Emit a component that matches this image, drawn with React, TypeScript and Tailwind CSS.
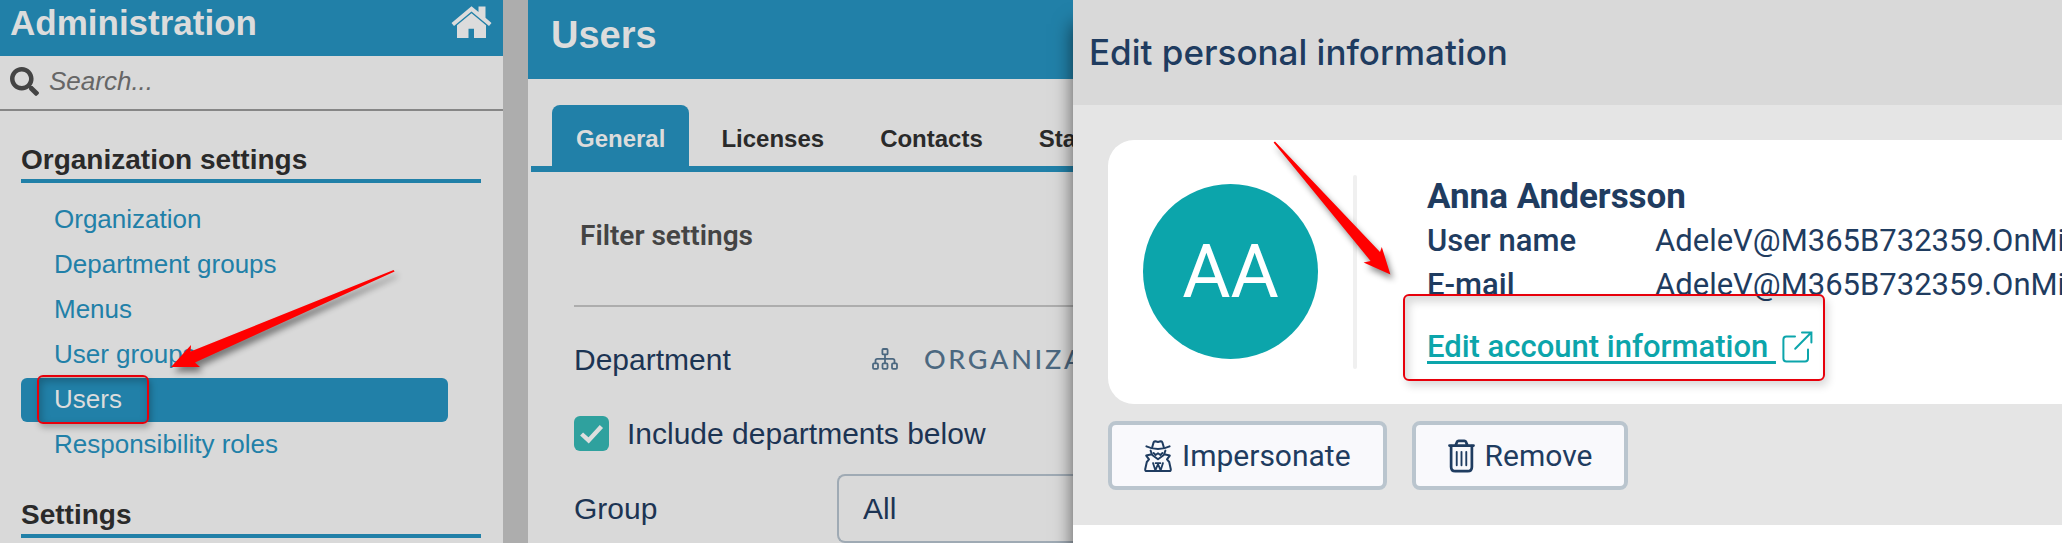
import React, { useState } from 'react';
import { FaSearch } from 'react-icons/fa';

const ORG_LINKS = ['Organization', 'Department groups', 'Menus', 'User groups', 'Users', 'Responsibility roles'];
const TABS = ['General', 'Licenses', 'Contacts', 'Statistics'];
const ACCOUNT = 'AdeleV@M365B732359.OnMicrosoft.com';

const HomeIcon: React.FC = () => (
  <svg width="41" height="32" viewBox="0 0 41 32" fill="currentColor" aria-hidden="true">
    <path d="M20.5 0.2 27.5 6V0.5H34.5V11.8L40.5 16.9 38 20 20.5 5.4 3 20 0.5 16.9Z" />
    <path d="M20.5 7.2 35 19.2V32H23V22.8H17.5V32H6V19.2Z" />
  </svg>
);

const OrgIcon: React.FC = () => (
  <svg width="26" height="22" viewBox="0 0 26 22" fill="none" stroke="currentColor" strokeWidth="1.8" aria-hidden="true">
    <rect x="10.4" y="1" width="5.2" height="5.4" rx="1" />
    <rect x="1" y="15.4" width="5" height="5.4" rx="1" />
    <rect x="10.5" y="15.4" width="5" height="5.4" rx="1" />
    <rect x="20" y="15.4" width="5" height="5.4" rx="1" />
    <path d="M13 6.4V15.4M3.5 15.4V12.6Q3.5 10.8 5.3 10.8H20.7Q22.5 10.8 22.5 12.6V15.4" />
  </svg>
);

const SpyIcon: React.FC = () => (
  <svg width="28" height="32" viewBox="0 0 28 32" fill="none" stroke="currentColor" strokeWidth="2" strokeLinejoin="round" strokeLinecap="round" aria-hidden="true">
    <path d="M8.2 7.2 9.6 2.4Q10 1 11.4 1.2L14 2 16.6 1.2Q18 1 18.4 2.4L19.8 7.2" />
    <path d="M2.4 6.4Q8 9 14 9T25.6 6.4" />
    <path d="M6.6 10.6 8.2 15 14 19.2 19.8 15 21.4 10.6" />
    <path d="M9.6 13 11.6 15 14 13.2 16.4 15 18.4 13" strokeWidth="1.8" />
    <path d="M6.8 14.6 2.2 15.6 5 19.4 2.8 22 1.2 29.2Q1 31 2.6 31H25.4Q27 31 26.8 29.2L25.2 22 23 19.4 25.8 15.6 21.2 14.6" />
    <path d="M9 23 11.4 30.4 14 24 16.6 30.4 19 23M11.6 23.2H16.4" strokeWidth="1.8" />
  </svg>
);

const TrashIcon: React.FC = () => (
  <svg width="27" height="34" viewBox="0 0 26 32" fill="none" stroke="currentColor" strokeWidth="2.6" strokeLinecap="round" strokeLinejoin="round" aria-hidden="true">
    <path d="M1.4 6H24.6M7.4 5.4 8.8 2.2Q9.2 1.4 10.2 1.4H15.8Q16.8 1.4 17.2 2.2L18.6 5.4" />
    <path d="M3 6.4V26.6Q3 30.6 7 30.6H19Q23 30.6 23 26.6V6.4" />
    <path d="M8.4 12V25M13 12V25M17.6 12V25" strokeWidth="1.8" />
  </svg>
);

const ExternalIcon: React.FC = () => (
  <svg width="31" height="32" viewBox="0 0 31 32" fill="none" stroke="currentColor" strokeWidth="2" strokeLinecap="round" aria-hidden="true">
    <path d="M13 5.4H4.4Q1.4 5.4 1.4 8.4V27.4Q1.4 30.4 4.4 30.4H23Q26 30.4 26 27.4V18.6" />
    <path d="M20 1.4H29.4V11.6M29 1.8 13.2 17.8" />
  </svg>
);

const SectionTitle: React.FC<{ children: React.ReactNode }> = ({ children }) => (
  <h2 className="border-b-4 border-[#2180a8] pb-[3px] text-[28px] leading-8 font-bold text-[#2a2a2a]">{children}</h2>
);

const Sidebar: React.FC = () => (
  <aside className="w-[503px] shrink-0 bg-[#d9d9d9]">
    <header className="flex h-14 items-start justify-between bg-[#2180a8] pr-[11px] pl-[10px] text-[#dcdcdc]">
      <h1 className="pt-[3px] text-[35px] leading-10 font-bold">Administration</h1>
      <a href="#home" aria-label="Home" className="pt-[6px]"><HomeIcon /></a>
    </header>
    <label className="flex h-[55px] items-center gap-[10px] border-b-2 border-[#868686] px-[10px] pb-[2px] text-[#444]">
      <FaSearch size={29} aria-hidden="true" />
      <input
        type="search"
        aria-label="Search"
        placeholder="Search..."
        className="min-w-0 flex-1 bg-transparent text-[26px] italic outline-none placeholder:text-[#666]"
      />
    </label>
    <nav className="pt-[33px] pr-[22px] pl-[21px]">
      <SectionTitle>Organization settings</SectionTitle>
      <ul className="mt-[15px] mr-[33px] flex flex-col gap-px">
        {ORG_LINKS.map(item => (
          <li key={item}>
            <a
              href="#users"
              className={`relative flex h-11 items-center rounded-md pb-[2px] pl-[33px] text-[26px] ${item === 'Users' ? 'bg-[#2180a8] text-[#dcdcdc]' : 'text-[#2180a8]'}`}
            >
              {item}
              {item === 'Users' && (
                <span className="absolute -top-[3px] left-4 h-[49px] w-28 rounded-md border-2 border-red-600 shadow-[2px_4px_6px_rgba(0,0,0,0.25),inset_2px_4px_8px_rgba(0,0,0,0.25)]" />
              )}
            </a>
          </li>
        ))}
      </ul>
      <div className="mt-8">
        <SectionTitle>Settings</SectionTitle>
      </div>
    </nav>
  </aside>
);

const UsersPanel: React.FC = () => {
  const [tab, setTab] = useState('General');
  const [below, setBelow] = useState(true);

  return (
    <main className="ml-[25px] min-w-0 flex-1 overflow-hidden bg-[#d9d9d9]">
      <header className="h-[79px] bg-[#2180a8] pt-3 pl-[23px] text-[#dcdcdc]">
        <h1 className="text-[38px] leading-[46px] font-bold">Users</h1>
      </header>
      <div role="tablist" className="mt-[26px] ml-[3px] flex gap-2 border-b-6 border-[#2180a8] pl-[21px]">
        {TABS.map(name => (
          <button
            key={name}
            role="tab"
            aria-selected={tab === name}
            onClick={() => setTab(name)}
            className={`h-[61px] shrink-0 rounded-t-lg px-6 pt-[6px] text-2xl font-bold ${tab === name ? 'bg-[#2180a8] text-[#dcdcdc]' : 'text-[#2a2a2a]'}`}
          >
            {name}
          </button>
        ))}
      </div>
      <form className="pl-[46px] text-[30px] text-[#1c3453]">
        <h2 className="border-b-2 border-[#adadad] pt-12 pb-[53px] pl-[6px] font-[Roboto,sans-serif] text-[28px] leading-8 font-semibold text-[#444]">
          Filter settings
        </h2>
        <div className="mt-8 flex h-10 items-center">
          <span className="w-[298px] shrink-0">Department</span>
          <button type="button" className="flex items-center gap-[26px] font-[Lato,sans-serif] text-[27px] font-medium tracking-widest text-[#4c6880]">
            <OrgIcon />
            ORGANIZATION
          </button>
        </div>
        <label className="mt-[35px] flex h-[38px] items-center gap-[18px] whitespace-nowrap">
          <span className="relative flex">
            <input
              type="checkbox"
              checked={below}
              onChange={e => setBelow(e.target.checked)}
              className="size-[35px] appearance-none rounded-md bg-[#2fa19e]"
            />
            {below && (
              <svg className="pointer-events-none absolute inset-0" width="35" height="35" viewBox="0 0 35 35" fill="none" stroke="#dedede" strokeWidth="4.4" aria-hidden="true">
                <path d="M7.6 18 14.6 24.4 27.4 10.4" />
              </svg>
            )}
          </span>
          Include departments below
        </label>
        <div className="mt-[22px] flex items-center">
          <label htmlFor="group" className="w-[263px] shrink-0">Group</label>
          <select id="group" className="h-[69px] min-w-0 flex-1 appearance-none rounded-l-lg border-2 border-r-0 border-[#9faab4] pl-6">
            <option>All</option>
          </select>
        </div>
      </form>
    </main>
  );
};

const PersonDrawer: React.FC = () => (
  <section className="z-10 w-[989px] shrink-0 bg-white font-[Roboto,sans-serif] text-[#1f3c60] shadow-[0_24px_18px_rgba(0,0,0,0.6)]">
    <header className="flex h-[105px] items-center bg-[#d9d9d9] px-4">
      <h1 className="font-[Inter,sans-serif] text-[35px] font-medium">Edit personal information</h1>
    </header>
    <div className="overflow-hidden bg-[#e5e5e5] pt-[35px] pb-[35px] pl-[35px]">
      <div className="flex rounded-l-[26px] bg-white py-[35px] pl-[35px]">
        <div className="mt-[9px] flex size-[175px] shrink-0 items-center justify-center rounded-full bg-[#0ca5ab] text-[74px] text-white">
          AA
        </div>
        <div className="ml-[35px] h-[194px] w-1 shrink-0 rounded-full bg-[#f0f0f0]" />
        <div className="ml-[70px] min-w-0">
          <h2 className="text-[35px] leading-[44px] font-bold">Anna Andersson</h2>
          <dl className="text-[31px] leading-[44px] whitespace-nowrap">
            <div className="flex">
              <dt className="w-[228px] shrink-0 font-medium">User name</dt>
              <dd>{ACCOUNT}</dd>
            </div>
            <div className="flex">
              <dt className="w-[228px] shrink-0 font-medium">E-mail</dt>
              <dd>{ACCOUNT}</dd>
            </div>
          </dl>
          <a href="#account" className="relative mt-[18px] inline-flex h-11 items-center gap-[6px] text-[31px] font-medium text-[#0ca5ab]">
            <span className="whitespace-pre underline decoration-3 underline-offset-4">{'Edit account information '}</span>
            <ExternalIcon />
            <span className="absolute -top-[31px] -right-3 -bottom-3 -left-6 rounded-md border-2 border-red-600 shadow-[3px_5px_8px_rgba(0,0,0,0.15),inset_4px_6px_8px_rgba(0,0,0,0.15)]" />
          </a>
        </div>
      </div>
      <div className="mt-[17px] flex gap-[25px] text-[30px]">
        <button className="flex h-[69px] items-center gap-[10px] rounded-lg border-4 border-[#bac5ce] bg-[#f9f9fc] px-8">
          <SpyIcon />
          Impersonate
        </button>
        <button className="flex h-[69px] items-center gap-[10px] rounded-lg border-4 border-[#bac5ce] bg-[#f9f9fc] px-8">
          <TrashIcon />
          Remove
        </button>
      </div>
    </div>
  </section>
);

const App: React.FC = () => {
  return (
    <div className="relative flex min-h-screen overflow-hidden bg-[#adadad] font-['Liberation_Sans',Arial,sans-serif]">
      <Sidebar />
      <UsersPanel />
      <PersonDrawer />

      {/* pointer arrows */}
      <svg className="pointer-events-none absolute top-0 left-0 z-20 drop-shadow-[3px_5px_3px_rgba(0,0,0,0.45)]" width="1400" height="400" viewBox="0 0 1400 400" fill="#f00" aria-hidden="true">
        <path d="M171 367 191 345 190.6 351.5 393.6 270 394.6 271.6 195 362.4 200 367Z" />
        <path d="M1390.4 274.6 1363.6 262.4 1370.6 261 1273.6 142.6 1275 141.6 1380 252 1381.8 247Z" />
      </svg>
    </div>
  );
};

export default App;
